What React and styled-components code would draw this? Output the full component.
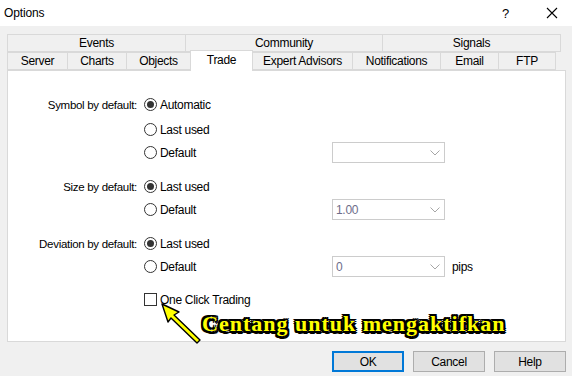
import React from 'react';
import styled, { createGlobalStyle } from 'styled-components';

const GlobalStyle = createGlobalStyle`
    html, body {
        margin:0;
        padding:0;
        background:#f0f0f0;
    }
    body {
        font-family:"Liberation Sans", Arial, sans-serif;
        font-size:11px;
        letter-spacing:-0.15px;
        color:#000;
    }
`

const topTabs = [
    { label: 'Events', w: 179 },
    { label: 'Community', w: 198 },
    { label: 'Signals', w: 179 },
]

const bottomTabs = [
    { label: 'Server', w: 61 },
    { label: 'Charts', w: 60 },
    { label: 'Objects', w: 65 },
    { label: 'Trade', w: 63, active: true },
    { label: 'Expert Advisors', w: 101 },
    { label: 'Notifications', w: 89 },
    { label: 'Email', w: 59 },
    { label: 'FTP', w: 58 },
]

const Chevron = () => (
    <svg width="10" height="6" viewBox="0 0 10 6">
        <path d="M0.5 0.5 L5 5 L9.5 0.5" fill="none" stroke="#a6a6a6" strokeWidth="1" />
    </svg>
)

const Select = ({ value }) => (
    <SelectBox>
        <span>{value}</span>
        <Chevron />
    </SelectBox>
)

const Radio = ({ checked, children }) => (
    <Option>
        <RadioDot $checked={checked} />
        <span>{children}</span>
    </Option>
)

const App = () => {
    return (
        <Window>
            <GlobalStyle />
            <TitleBar>
                <span>Options</span>
                <TitleButtons>
                    <span>?</span>
                    <svg width="12" height="12" viewBox="0 0 12 12">
                        <path d="M1 1 L11 11 M11 1 L1 11" stroke="#000" strokeWidth="1.1" />
                    </svg>
                </TitleButtons>
            </TitleBar>

            <Body>
                <TabRow>
                    {topTabs.map(t => <Tab key={t.label} $w={t.w}>{t.label}</Tab>)}
                </TabRow>
                <TabRow>
                    {bottomTabs.map(t => <Tab key={t.label} $w={t.w} $active={t.active}>{t.label}</Tab>)}
                </TabRow>

                <Panel>
                    <FormRow $mt={22}>
                        <Label>Symbol by default:</Label>
                        <Radio checked>Automatic</Radio>
                    </FormRow>
                    <FormRow $mt={2}>
                        <Label />
                        <Radio>Last used</Radio>
                    </FormRow>
                    <FormRow>
                        <Label />
                        <Radio>Default</Radio>
                        <Select value="" />
                    </FormRow>

                    <FormRow $mt={11}>
                        <Label>Size by default:</Label>
                        <Radio checked>Last used</Radio>
                    </FormRow>
                    <FormRow>
                        <Label />
                        <Radio>Default</Radio>
                        <Select value="1.00" />
                    </FormRow>

                    <FormRow $mt={11}>
                        <Label>Deviation by default:</Label>
                        <Radio checked>Last used</Radio>
                    </FormRow>
                    <FormRow>
                        <Label />
                        <Radio>Default</Radio>
                        <Select value="0" />
                        <Unit>pips</Unit>
                    </FormRow>

                    <FormRow $mt={10}>
                        <Label />
                        <Option>
                            <CheckBox />
                            <span>One Click Trading</span>
                        </Option>
                    </FormRow>
                </Panel>

                <Footer>
                    <Button $default>OK</Button>
                    <Button>Cancel</Button>
                    <Button>Help</Button>
                </Footer>
            </Body>

            <Arrow width="50" height="46" viewBox="0 0 50 46">
                <path
                    d="M5 4 L22 12 L17 15 L43 40 L40 43 L14 18 L11 22 Z"
                    fill="#ffff00"
                    stroke="#000"
                    strokeWidth="1.4"
                    strokeLinejoin="round"
                />
            </Arrow>
            <Callout>Centang untuk mengaktifkan</Callout>
        </Window>
    );
};

export default App;

const Window = styled.div`
    position:relative;
    width:572px;
    height:376px;
    overflow:hidden;
    display:flex;
    flex-direction:column;
`

const TitleBar = styled.div`
    height:26px;
    background:#fff;
    display:flex;
    align-items:center;
    justify-content:space-between;
    padding:0 14px 0 4px;
    span{
        font-size:12px;
    }
`

const TitleButtons = styled.div`
    display:flex;
    align-items:center;
    gap:37px;
    span{
        font-size:13px;
    }
`

const Body = styled.div`
    flex:1;
    padding:8px 6px 0 7px;
    display:flex;
    flex-direction:column;
`

const TabRow = styled.div`
    display:flex;
    height:18px;
`

const Tab = styled.div`
    box-sizing:border-box;
    width:${p => p.$w}px;
    height:${p => p.$active ? 21 : 18}px;
    margin-top:${p => p.$active ? -2 : 0}px;
    margin-right:-1px;
    border:1px solid #d9d9d9;
    border-bottom:${p => p.$active ? 'none' : '1px solid #d9d9d9'};
    background:${p => p.$active ? '#fff' : '#f0f0f0'};
    position:relative;
    z-index:${p => p.$active ? 2 : 1};
    display:flex;
    align-items:center;
    justify-content:center;
    padding-bottom:${p => p.$active ? 3 : 0}px;
    font-size:12px;
    letter-spacing:-0.3px;
    white-space:nowrap;
    &:last-child{
        margin-right:0;
    }
`

const Panel = styled.div`
    box-sizing:border-box;
    height:272px;
    background:#fff;
    border:1px solid #d9d9d9;
    position:relative;
    z-index:1;
`

const FormRow = styled.div`
    display:grid;
    grid-template-columns:136px 188px 113px auto;
    align-items:center;
    height:23px;
    margin-top:${p => p.$mt || 0}px;
    font-size:11.5px;
    letter-spacing:-0.3px;
`

const Label = styled.div`
    text-align:right;
    padding-right:7px;
    white-space:nowrap;
`

const Option = styled.div`
    display:flex;
    align-items:center;
    gap:3px;
    white-space:nowrap;
    font-size:12px;
`

const RadioDot = styled.span`
    box-sizing:border-box;
    width:13px;
    height:13px;
    border:1px solid #333;
    border-radius:50%;
    display:flex;
    align-items:center;
    justify-content:center;
    &::after{
        content:'';
        width:7px;
        height:7px;
        border-radius:50%;
        background:${p => p.$checked ? '#333' : 'transparent'};
    }
`

const CheckBox = styled.span`
    box-sizing:border-box;
    width:13px;
    height:13px;
    border:1px solid #333;
    background:#fff;
`

const SelectBox = styled.div`
    box-sizing:border-box;
    width:113px;
    height:21px;
    border:1px solid #cccccc;
    background:#fff;
    display:flex;
    align-items:center;
    justify-content:space-between;
    padding:0 4px 0 3px;
    color:#6d6d8a;
    font-size:12px;
`

const Unit = styled.div`
    padding-left:7px;
    font-size:12px;
`

const Footer = styled.div`
    display:flex;
    justify-content:flex-end;
    gap:9px;
    margin-top:9px;
`

const Button = styled.button`
    box-sizing:border-box;
    width:72px;
    height:21px;
    background:#e1e1e1;
    border:${p => p.$default ? '2px solid #0078d7' : '1px solid #adadad'};
    font-family:"Liberation Sans", Arial, sans-serif;
    font-size:12px;
    letter-spacing:-0.3px;
    color:#000;
    padding:0;
`

const Arrow = styled.svg`
    position:absolute;
    left:157px;
    top:300px;
    z-index:3;
`

const Callout = styled.div`
    position:absolute;
    left:202px;
    top:311px;
    z-index:3;
    font-family:"Liberation Serif", "Times New Roman", serif;
    font-weight:bold;
    font-size:22px;
    letter-spacing:1px;
    color:#ffff00;
    white-space:nowrap;
    text-shadow:
        -2px -2px 0 #000, 2px -2px 0 #000, -2px 2px 0 #000, 2px 2px 0 #000,
        0 -2px 0 #000, 0 2px 0 #000, -2px 0 0 #000, 2px 0 0 #000,
        1px 3px 0 #000;
`
